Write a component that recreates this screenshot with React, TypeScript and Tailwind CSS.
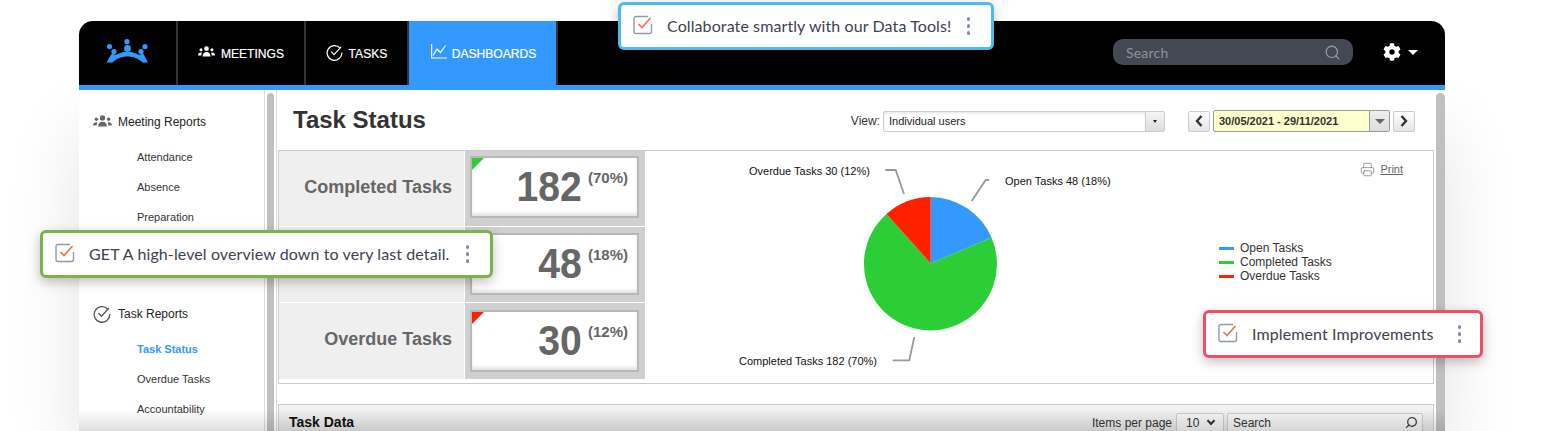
import { Printer, Search } from "lucide-react";
import { FaCog } from "react-icons/fa";

const arial = "font-['Liberation_Sans',Arial,sans-serif]";

function Logo() {
  return (
    <svg width="44" height="26" viewBox="0 0 44 26" fill="#3399ff">
      <circle cx="3.500" cy="7.500" r="2.600" />
      <circle cx="21" cy="2.700" r="2.600" />
      <circle cx="39" cy="7.500" r="2.600" />
      <circle cx="21.500" cy="9.500" r="3.400" />
      <circle cx="8" cy="12.500" r="2.600" />
      <circle cx="35" cy="12.500" r="2.600" />
      <path d="M0.500 23.500 L6 14 C8 16 10 16 12 15 C18 12 25 12 31 15 C33 16 35 16 37 14 L42 23.500 L36.500 23.500 C29 15.500 14 15.500 6.500 23.500 Z" />
    </svg>
  );
}

function GroupIcon({ className, width }: { className: string; width: number }) {
  return (
    <svg width={width} viewBox="0 0 18 12" fill="currentColor" className={className}>
      <circle cx="9" cy="2.800" r="2.500" />
      <circle cx="3.200" cy="4" r="1.600" />
      <circle cx="14.800" cy="4" r="1.600" />
      <path d="M4.800 11 C4.800 8 6.500 6.300 9 6.300 C11.500 6.300 13.200 8 13.200 11 Z" />
      <path d="M0 10 C0 8 1.200 6.800 3.200 6.800 C3.600 6.800 3.900 6.900 4.200 7 C3.700 8 3.500 9 3.500 10 Z" />
      <path d="M18 10 C18 8 16.800 6.800 14.800 6.800 C14.400 6.800 14.100 6.900 13.800 7 C14.300 8 14.500 9 14.500 10 Z" />
    </svg>
  );
}

function CheckIcon({ size, className }: { size: number; className: string }) {
  return (
    <svg width={size} height={size} viewBox="0 0 18 18" fill="none" stroke="currentColor" strokeWidth="1.300" className={className}>
      <path d="M14.800 4.200 A7.800 7.800 0 1 0 16.800 9" />
      <path d="M5.500 8 L8.500 11.200 L16 3" />
    </svg>
  );
}

function ChartIcon() {
  return (
    <svg width="16" height="15" viewBox="0 0 16 15" fill="none" stroke="currentColor" strokeWidth="1.200" className="mb-[3px] ml-[2px] -mr-[1px]">
      <path d="M0.600 0 V14 H16" />
      <path d="M2 11.500 L6 5 L9.500 8.500 L14.500 1.500" />
    </svg>
  );
}

function Chevron({ dir }: { dir: "left" | "right" }) {
  return (
    <svg width="8" height="12" viewBox="0 0 8 12" fill="none" stroke="#333" strokeWidth="2.400">
      <path d={dir === "left" ? "M6.500 1 L2 6 L6.500 11" : "M1.500 1 L6 6 L1.500 11"} />
    </svg>
  );
}

function NavTab({ icon, label, active, className }: { icon: React.ReactNode; label: string; active?: boolean; className: string }) {
  return (
    <div className={`flex items-center justify-center gap-[6px] h-full border-r-2 border-[#333] text-[12.100px] [-webkit-text-stroke:0.2px_white] ${active ? "bg-[#3399ff]" : ""} ${className}`}>
      {icon}
      <span className="mt-[2px]">{label}</span>
    </div>
  );
}

function Callout({ text, color, className, gap, dots }: { text: string; color: string; className: string; gap: string; dots: string }) {
  return (
    <div className={`absolute z-20 flex items-center h-[48px] bg-white border-[3px] rounded-[6px] shadow-[0_4px_12px_rgba(0,0,0,0.25)] font-['Lato',sans-serif] text-[16px] tracking-[0.1px] text-[#3d4250] ${color} ${className}`}>
      <svg className="ml-[12px] shrink-0 -mt-[2px]" width="20" height="20" viewBox="0 0 20 20" fill="none">
        <path d="M15 1.500 H3 a2 2 0 0 0 -2 2 V16.500 a2 2 0 0 0 2 2 H16.500 a2 2 0 0 0 2 -2 V9" stroke="#8c9bb5" strokeWidth="1.400" />
        <path d="M5.500 9 L9 12.500 L17.500 3" stroke="#f0744a" strokeWidth="1.700" />
      </svg>
      <span className={gap}>{text}</span>
      <span className={`flex flex-col gap-[3.500px] ml-auto ${dots}`}>
        <i className="block w-[3.500px] h-[3.500px] rounded-full bg-[#7f8fa8]" />
        <i className="block w-[3.500px] h-[3.500px] rounded-full bg-[#7f8fa8]" />
        <i className="block w-[3.500px] h-[3.500px] rounded-full bg-[#7f8fa8]" />
      </span>
    </div>
  );
}

function StatRow({ label, value, pct, flag, height, top }: { label?: string; value: string; pct: string; flag?: string; height: string; top: string }) {
  return (
    <div className={`flex mb-px ${height}`}>
      <div className="w-[185px] bg-[#efefef] flex items-center justify-end pr-[12px] pb-[3px] text-[18px] font-bold text-[#666]">{label}</div>
      <div className={`w-[180px] ml-px bg-[#d0d0d0] pl-[5px] pr-[6px] ${top}`}>
        <div className="relative h-[62px] bg-white border-2 border-[#b8b8b8] shadow-[inset_0_-3px_3px_rgba(0,0,0,0.1)] flex justify-end pr-[9px] text-[#666] font-bold">
          {flag && <div className={`absolute left-0 top-0 w-0 h-0 border-t-[12px] border-r-[12px] border-r-transparent ${flag}`} />}
          <span className="text-[43px] leading-[56px] scale-x-[0.91] origin-right">{value}</span>
          <span className="text-[15px] leading-[16px] ml-[6px] mt-[12px]">{pct}</span>
        </div>
      </div>
    </div>
  );
}

function PieChart() {
  const text = { fontFamily: "Liberation Sans, Arial, sans-serif", fontSize: 11, fill: "#111" };
  return (
    <svg width="400" height="233" viewBox="730 151 400 233" className="absolute left-[451px] top-0">
      <path d="M930.700 263.500 L930.700 197 A66.500 66.500 0 0 1 991.500 237.500 Z" fill="#3399ff" />
      <path d="M930.700 263.500 L991.500 237.500 A66.500 66.500 0 1 1 886.500 214 Z" fill="#2bce36" />
      <path d="M930.700 263.500 L886.500 214 A66.500 66.500 0 0 1 930.700 197 Z" fill="#ff2000" />
      <g fill="none" stroke="#999" strokeWidth="1.800">
        <path d="M885.300 170 H895.700 L904 194" />
        <path d="M971.700 201 L985.700 180 H989" />
        <path d="M914.300 337 L909.300 360.300 H892.700" />
      </g>
      <text x="749" y="175" {...text}>Overdue Tasks 30 (12%)</text>
      <text x="1005" y="185" {...text}>Open Tasks 48 (18%)</text>
      <text x="739" y="365" {...text}>Completed Tasks 182 (70%)</text>
    </svg>
  );
}

export default function App() {
  return (
    <div className={`relative w-[1546px] h-[431px] overflow-hidden bg-white ${arial}`}>
      <div className="relative ml-[79px] pt-[21px] w-[1366px]">
        {/* top nav */}
        <header className="relative z-10 h-[69px] bg-black border-b-[5px] border-[#3399ff] rounded-t-[14px] flex items-center text-white">
          <div className="w-[99px] h-full border-r-2 border-[#333] flex items-center justify-center pb-[3px]">
            <Logo />
          </div>
          <NavTab className="w-[128px]" icon={<GroupIcon width={17} className="mb-[2px]" />} label="MEETINGS" />
          <NavTab className="w-[103px]" icon={<CheckIcon size={17} className="mb-[2px]" />} label="TASKS" />
          <NavTab active className="w-[149px]" icon={<ChartIcon />} label="DASHBOARDS" />
          <div className="ml-auto flex items-center pb-[2px]">
            <div className="w-[240px] h-[26px] rounded-[10px] bg-[#434853] flex items-center justify-between pl-[13px] pr-[12px] font-['Lato',sans-serif] text-[14px] tracking-[0.2px] text-[#8f939b]">
              <span>Search</span>
              <Search size={17} strokeWidth={1.5} className="text-[#a0a4aa]" />
            </div>
            <FaCog size={18} className="ml-[30px]" />
            <span className="ml-[7px] mr-[27px] w-0 h-0 border-x-[5px] border-x-transparent border-t-[5px] border-t-white" />
          </div>
        </header>

        {/* body */}
        <div className="relative flex h-[341px] bg-white shadow-[0_40px_70px_rgba(0,0,0,0.11)]">
          <aside className="w-[185px] shrink-0 text-[12px] text-[#222]">
            <div className="flex items-center gap-[6px] pl-[14px] pt-[20px] h-[43px]">
              <GroupIcon width={19} className="text-[#666]" />
              <span>Meeting Reports</span>
            </div>
            <ul className="pl-[58px] text-[11px] text-[#333] mt-[17px] flex flex-col gap-[15px] [&>li]:leading-[15px]">
              <li>Attendance</li>
              <li>Absence</li>
              <li>Preparation</li>
            </ul>
            <div className="flex items-center gap-[7px] pl-[14px] mt-[80px]">
              <CheckIcon size={18} className="text-[#555]" />
              <span>Task Reports</span>
            </div>
            <ul className="pl-[58px] text-[11px] text-[#333] mt-[19px] flex flex-col gap-[15px] [&>li]:leading-[15px]">
              <li className="text-[#3399ff] font-bold">Task Status</li>
              <li>Overdue Tasks</li>
              <li>Accountability</li>
            </ul>
          </aside>

          <div className="w-[13px] shrink-0 border-x border-[#ddd] px-[2px] pt-[3px]">
            <div className="h-full bg-[#c0c0c0] rounded-t-[5px]" />
          </div>

          <main className="flex-1 min-w-0 pl-px pr-[3px]">
            <div className="flex items-center h-[60px] pl-[15px]">
              <h1 className="text-[24px] font-bold text-[#333]">Task Status</h1>
              <div className="ml-auto flex items-center text-[12px] text-[#333] pt-[2px]">
                <span className="mr-[3px] text-[12px]">View:</span>
                <div className="w-[282px] h-[21px] flex border border-[#ccc] rounded-[2px] text-[11px] text-[#222]">
                  <span className="flex-1 pl-[5px] leading-[19px] shadow-[inset_0_2px_2px_rgba(0,0,0,0.08)]">Individual users</span>
                  <span className="w-[19px] border-l border-[#ccc] bg-gradient-to-b from-[#f5f5f5] to-[#ddd] flex items-center justify-center">
                    <i className="w-0 h-0 border-x-[2.500px] border-x-transparent border-t-[3.500px] border-t-[#222]" />
                  </span>
                </div>
                <button className="ml-[23px] w-[22px] h-[21px] border border-[#ccc] rounded-[2px] bg-gradient-to-b from-white to-[#e5e5e5] flex items-center justify-center">
                  <Chevron dir="left" />
                </button>
                <div className="ml-[3px] w-[177px] h-[22px] flex border border-[#999] rounded-[2px] bg-[#ffffcc]">
                  <span className="flex-1 pl-[5px] text-[11px] font-bold leading-[20px] text-[#333]">30/05/2021 - 29/11/2021</span>
                  <span className="w-[20px] border-l border-[#999] bg-gradient-to-b from-[#eee] to-[#ddd] flex items-center justify-center">
                    <i className="w-0 h-0 border-x-[5px] border-x-transparent border-t-[5px] border-t-[#666]" />
                  </span>
                </div>
                <button className="ml-[3px] mr-[19px] w-[22px] h-[21px] border border-[#ccc] rounded-[2px] bg-gradient-to-b from-white to-[#e5e5e5] flex items-center justify-center">
                  <Chevron dir="right" />
                </button>
              </div>
            </div>

            <section className="relative h-[234px] w-[1156px] border border-[#ccc]">
              <StatRow label="Completed Tasks" value="182" pct="(70%)" flag="border-t-[#2bce36]" height="h-[75px]" top="pt-[5px]" />
              <StatRow value="48" pct="(18%)" height="h-[75px]" top="pt-[6px]" />
              <StatRow label="Overdue Tasks" value="30" pct="(12%)" flag="border-t-[#ff2000]" height="h-[76px]" top="pt-[7px]" />
              <PieChart />
              <div className="absolute right-[30px] top-[10px] flex items-center gap-[5px] text-[11px] text-[#666] underline">
                <Printer size={15} strokeWidth={1} />
                <span>Print</span>
              </div>
              <div className="absolute left-[940px] top-[90px] text-[12px] leading-[14px] text-[#333]">
                {[["Open Tasks", "bg-[#3399ff]"], ["Completed Tasks", "bg-[#2bce36]"], ["Overdue Tasks", "bg-[#ff2000]"]].map(([name, c]) => (
                  <div key={name} className="flex items-center gap-[6px]">
                    <i className={`block w-[15px] h-[3px] ${c}`} />
                    <span>{name}</span>
                  </div>
                ))}
              </div>
            </section>

            <div className="mt-[20px] h-[40px] w-[1156px] border border-[#ccc] bg-gradient-to-b from-[#f4f4f4] to-[#e2e2e2] flex items-start pt-[8px] pl-[10px] pr-[10px]">
              <span className="text-[14px] font-bold text-[#111] leading-[18px]">Task Data</span>
              <div className="ml-auto flex items-center text-[12px] text-[#333]">
                <span className="mr-[4px]">Items per page</span>
                <div className="w-[48px] h-[19px] border border-[#ccc] rounded-[2px] flex items-center justify-between px-[9px] bg-[#f5f5f5]">
                  <span>10</span>
                  <i className="block w-[6px] h-[6px] border-r-2 border-b-2 border-[#333] rotate-45 -mt-[3px]" />
                </div>
                <div className="ml-[3px] w-[196px] h-[19px] border border-[#ccc] rounded-[2px] flex items-center justify-between pl-[5px] pr-[4px] bg-[#f5f5f5]">
                  <span>Search</span>
                  <Search size={13} strokeWidth={2.5} className="text-[#444] -scale-x-100" />
                </div>
              </div>
            </div>
          </main>

          <div className="w-[9px] shrink-0 pt-[3px] -ml-[1px]">
            <div className="h-full bg-[#c0c0c0] rounded-t-[5px]" />
          </div>
        </div>

        <div className="absolute left-0 right-0 bottom-0 h-[22px] bg-gradient-to-b from-transparent to-[rgba(0,0,0,0.13)] z-10" />
      </div>

      <Callout text="Collaborate smartly with our Data Tools!" color="border-[#4dbce9]" className="left-[618px] top-[2px] w-[376px]" gap="ml-[14px]" dots="mr-[21px]" />
      <Callout text="GET A high-level overview down to very last detail." color="border-[#7fb04f]" className="left-[40px] top-[230px] w-[453px]" gap="ml-[14px]" dots="mr-[21px]" />
      <Callout text="Implement Improvements" color="border-[#ee4f66]" className="left-[1203px] top-[310px] w-[280px]" gap="ml-[14px]" dots="mr-[19px]" />
    </div>
  );
}
